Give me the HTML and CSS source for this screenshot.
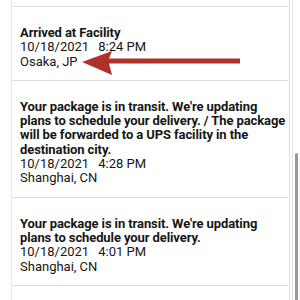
FILE: index.html
```html
<!DOCTYPE html>
<html>
<head>
<meta charset="utf-8">
<link rel="stylesheet" href="styles.css">
</head>
<body>
<div class="page">
  <div class="frame">
    <div class="list">
      <div class="lead"></div>
      <div class="item">
        <div class="title">Arrived at Facility</div>
        <div class="when"><span>10/18/2021</span><span class="time">8:24 PM</span></div>
        <div class="where">Osaka, JP</div>
      </div>
      <div class="item">
        <div class="title">Your package is in transit. We're updating<br>plans to schedule your delivery. / The package<br>will be forwarded to a UPS facility in the<br>destination city.</div>
        <div class="when"><span>10/18/2021</span><span class="time">4:28 PM</span></div>
        <div class="where">Shanghai, CN</div>
      </div>
      <div class="item">
        <div class="title">Your package is in transit. We're updating<br>plans to schedule your delivery.</div>
        <div class="when"><span>10/18/2021</span><span class="time">4:01 PM</span></div>
        <div class="where">Shanghai, CN</div>
      </div>
      <div class="item"></div>
    </div>
  </div>
  <svg class="arrow" width="170" height="30" viewBox="0 0 170 30">
    <polygon points="2,12 32,1 29,8.5 160,8.5 160,13.5 29,13.5 32,25" fill="#b0302a"/>
  </svg>
  <div class="scrollbar"></div>
</div>
</body>
</html>
```
FILE: styles.css
```css
html, body {
  margin: 0;
  padding: 0;
  background: #ffffff;
}
body {
  font-family: Roboto, "Liberation Sans", Arial, sans-serif;
  font-size: 13px;
  line-height: 14.3px;
  color: #161616;
  overflow: hidden;
}
.page {
  position: relative;
  width: 300px;
  height: 300px;
  overflow: hidden;
}
.frame {
  width: 293px;
  border-right: 1px solid #e6e6e6;
  height: 300px;
  box-sizing: border-box;
}
.list {
  margin-left: 11px;
  width: 279px;
  box-sizing: border-box;
  border-left: 1px solid #e8e8e8;
  border-right: 1px solid #e0e0e0;
  height: 300px;
}
.lead {
  height: 6px;
}
.item {
  border-top: 1px solid #dcdcdc;
  padding: 19px 0 11px 8px;
  margin-right: 1px;
  white-space: nowrap;
}
.title {
  font-weight: bold;
  letter-spacing: -0.1px;
}
.time {
  margin-left: 9px;
}
.arrow {
  position: absolute;
  left: 80px;
  top: 50px;
}
.scrollbar {
  position: absolute;
  left: 295px;
  top: 153px;
  width: 3px;
  height: 160px;
  border-radius: 2px;
  background: #9a9a9a;
}
```
